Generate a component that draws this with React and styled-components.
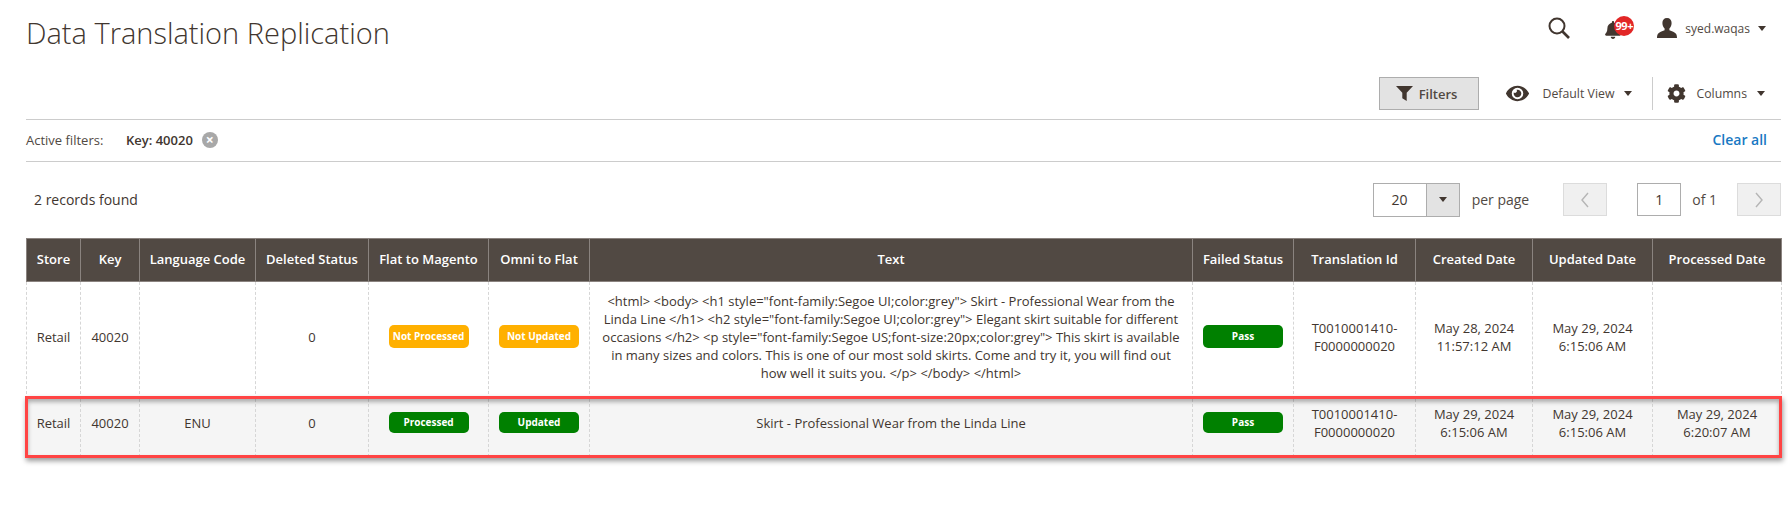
import React from 'react';
import styled, { createGlobalStyle } from 'styled-components';
import { FaBell, FaCog, FaEye } from 'react-icons/fa';

const GlobalStyle = createGlobalStyle`
  html, body {
    margin: 0;
    background: #fff;
  }
  body {
    font-family: "Open Sans", "Liberation Sans", sans-serif;
    color: #41362f;
    overflow: hidden;
  }
`;

const columns = [
  { label: 'Store', width: 54 },
  { label: 'Key', width: 59 },
  { label: 'Language Code', width: 116 },
  { label: 'Deleted Status', width: 113 },
  { label: 'Flat to Magento', width: 120 },
  { label: 'Omni to Flat', width: 101 },
  { label: 'Text', width: 603 },
  { label: 'Failed Status', width: 101 },
  { label: 'Translation Id', width: 122 },
  { label: 'Created Date', width: 117 },
  { label: 'Updated Date', width: 120 },
  { label: 'Processed Date', width: 129 },
];

const longText =
  '<html> <body> <h1 style="font-family:Segoe UI;color:grey"> Skirt - Professional Wear from the Linda Line </h1> <h2 style="font-family:Segoe UI;color:grey"> Elegant skirt suitable for different occasions </h2> <p style="font-family:Segoe US;font-size:20px;color:grey"> This skirt is available in many sizes and colors. This is one of our most sold skirts. Come and try it, you will find out how well it suits you. </p> </body> </html>';

const Page = styled.div`
  width: 1788px;
  height: 509px;
  box-sizing: border-box;
  padding: 0 7px 0 26px;
`;

const Header = styled.header`
  height: 77px;
  display: flex;
  justify-content: space-between;
  align-items: flex-start;
`;

const Title = styled.h1`
  margin: 14px 0 0;
  font-size: 29px;
  line-height: 38px;
  font-weight: 300;
  color: #41362f;
`;

const Actions = styled.div`
  display: flex;
  align-items: center;
  height: 24px;
  margin-top: 16px;
  padding-right: 15px;
`;

const SearchIcon = styled.svg`
  width: 22px;
  height: 22px;
  margin-right: 34px;
`;

const Bell = styled.div`
  position: relative;
  width: 18px;
  height: 20px;
  margin-right: 35px;
  display: flex;
  align-items: center;
  color: #41362f;
  font-size: 18px;
  padding-top: 4px;
`;

const Badge = styled.span`
  position: absolute;
  left: 10px;
  top: 0;
  width: 20px;
  height: 20px;
  border-radius: 50%;
  background: #e22626;
  color: #fff;
  font-size: 11px;
  font-weight: 700;
  letter-spacing: -0.4px;
  line-height: 20px;
  text-align: center;
`;

const UserIcon = styled.svg`
  width: 20px;
  height: 20px;
  margin-right: 8px;
`;

const UserName = styled.span`
  font-size: 12px;
  color: #514943;
`;

const Caret = styled.span`
  width: 0;
  height: 0;
  margin-left: ${(p) => p.$gap || 10}px;
  border-left: 4px solid transparent;
  border-right: 4px solid transparent;
  border-top: 5px solid #41362f;
`;

const Toolbar = styled.div`
  height: 42px;
  display: flex;
  justify-content: flex-end;
  align-items: flex-start;
  border-bottom: 1px solid #cccccc;
  padding-right: 16px;
`;

const FilterButton = styled.button`
  width: 100px;
  height: 33px;
  box-sizing: border-box;
  padding: 0 4px 0 0;
  margin-right: 27px;
  display: flex;
  align-items: center;
  justify-content: center;
  gap: 6px;
  background: #e3e3e3;
  border: 1px solid #adadad;
  color: #514943;
  font-family: inherit;
  font-size: 13px;
  font-weight: 600;
`;

const FunnelIcon = styled.svg`
  width: 17px;
  height: 15px;
`;

const ToolbarItem = styled.div`
  height: 33px;
  display: flex;
  align-items: center;
  font-size: 12.3px;
  color: #514943;
  svg {
    color: #41362f;
  }
`;

const ViewItem = styled(ToolbarItem)`
  padding-right: 20px;
  border-right: 1px solid #cccccc;
  svg {
    font-size: 23px;
    margin-right: 14px;
  }
`;

const ColumnsItem = styled(ToolbarItem)`
  padding-left: 14px;
  svg {
    font-size: 19px;
    margin-right: 10px;
  }
`;

const ActiveFilters = styled.div`
  height: 42px;
  display: flex;
  align-items: center;
  border-bottom: 1px solid #cccccc;
  font-size: 13px;
  padding: 0 14px 2px 0;
  box-sizing: border-box;
`;

const FilterLabel = styled.span`
  width: 100px;
  color: #514943;
`;

const FilterValue = styled.span`
  font-weight: 600;
  color: #41362f;
`;

const RemoveFilter = styled.span`
  width: 16px;
  height: 16px;
  margin-left: 9px;
  border-radius: 50%;
  background: #a8a8a8;
  color: #fff;
  font-size: 14px;
  font-weight: 700;
  line-height: 15px;
  text-align: center;
`;

const ClearAll = styled.a`
  margin-left: auto;
  color: #1979c3;
  font-size: 14px;
  font-weight: 600;
`;

const Pager = styled.div`
  height: 76px;
  display: flex;
  align-items: center;
  padding-bottom: 1px;
  box-sizing: border-box;
`;

const Records = styled.span`
  margin-left: 8px;
  margin-right: auto;
  font-size: 14px;
  color: #41362f;
`;

const PerPage = styled.div`
  width: 87px;
  height: 34px;
  box-sizing: border-box;
  display: flex;
  border: 1px solid #adadad;
`;

const PerPageValue = styled.span`
  flex: 1;
  font-size: 14px;
  line-height: 32px;
  text-align: center;
`;

const PerPageToggle = styled.span`
  width: 32px;
  display: flex;
  align-items: center;
  justify-content: center;
  background: #e3e3e3;
  border-left: 1px solid #adadad;
  ${Caret} {
    margin: 0;
  }
`;

const PagerText = styled.span`
  margin: ${(p) => p.$margin};
  font-size: 14px;
  color: #514943;
`;

const PageButton = styled.button`
  width: 44px;
  height: 33px;
  box-sizing: border-box;
  padding: 0;
  display: flex;
  align-items: center;
  justify-content: center;
  background: #f0f0f0;
  border: 1px solid #dcdcdc;
  svg {
    width: 10px;
    height: 16px;
  }
`;

const PageInput = styled.span`
  width: 44px;
  height: 33px;
  box-sizing: border-box;
  margin-left: 30px;
  border: 1px solid #adadad;
  font-size: 14px;
  line-height: 31px;
  text-align: center;
`;

const TableWrap = styled.div`
  position: relative;
  width: 1755px;
`;

const Table = styled.table`
  width: 1755px;
  table-layout: fixed;
  border-collapse: collapse;
`;

const HeadCell = styled.th`
  width: ${(p) => p.$width}px;
  height: 43px;
  box-sizing: border-box;
  padding: 0 0 3px;
  background: #514943;
  border: 1px solid #8a837f;
  color: #fff;
  font-size: 13px;
  font-weight: 600;
  text-align: center;
`;

const Row = styled.tr`
  background: ${(p) => (p.$shaded ? '#f5f5f5' : '#fff')};
`;

const Cell = styled.td`
  height: ${(p) => (p.$shaded ? 58 : 117)}px;
  box-sizing: border-box;
  padding: ${(p) => (p.$shaded ? '0 8px 10px' : '0 8px 7px')};
  border-left: 1px dashed #d6d6d6;
  border-right: 1px dashed #d6d6d6;
  font-size: 13px;
  line-height: 18px;
  color: #41362f;
  text-align: center;
`;

const StatusBadge = styled.span`
  display: block;
  width: 80px;
  height: ${(p) => (p.$shaded ? 21 : 23)}px;
  margin: 0 auto;
  border-radius: 5px;
  background: ${(p) => (p.$warn ? '#ffb000' : '#008000')};
  color: #fff;
  font-size: 10px;
  font-weight: 700;
  line-height: ${(p) => (p.$shaded ? 21 : 23)}px;
`;

// red annotation drawn over the second row
const Highlight = styled.div`
  position: absolute;
  left: -1px;
  right: -1px;
  top: 158px;
  height: 62px;
  box-sizing: border-box;
  border: 3px solid #ff4444;
  box-shadow: 1px 3px 5px rgba(0, 0, 0, 0.4), inset 0 3px 4px rgba(0, 0, 0, 0.3);
  pointer-events: none;
`;

const rows = [
  {
    store: 'Retail',
    key: '40020',
    lang: '',
    deleted: '0',
    flat: ['Not Processed', true],
    omni: ['Not Updated', true],
    text: longText,
    created: ['May 28, 2024', '11:57:12 AM'],
    updated: ['May 29, 2024', '6:15:06 AM'],
    processed: null,
  },
  {
    store: 'Retail',
    key: '40020',
    lang: 'ENU',
    deleted: '0',
    flat: ['Processed', false],
    omni: ['Updated', false],
    text: 'Skirt - Professional Wear from the Linda Line',
    created: ['May 29, 2024', '6:15:06 AM'],
    updated: ['May 29, 2024', '6:15:06 AM'],
    processed: ['May 29, 2024', '6:20:07 AM'],
    shaded: true,
  },
];

const DateLines = ({ value }) =>
  value ? (
    <>
      {value[0]}
      <br />
      {value[1]}
    </>
  ) : null;

const App = () => {
  return (
    <Page>
      <GlobalStyle />
      <Header>
        <Title>Data Translation Replication</Title>
        <Actions>
          <SearchIcon viewBox="0 0 22 22" fill="none" stroke="#41362f" strokeWidth="2">
            <circle cx="9" cy="9" r="7.5" />
            <path d="M14.5 14.5L21 21" strokeWidth="2.6" />
          </SearchIcon>
          <Bell>
            <FaBell />
            <Badge>99+</Badge>
          </Bell>
          <UserIcon viewBox="0 0 20 20" fill="#41362f">
            <path d="M10 0c3 0 4.600 2 4.600 5 0 2.400-1 4.400-2.200 5.600v1.600c2.600 1 5.400 2 6.600 3.600.6.9 1 2.600 1 4.200H0c0-1.600.4-3.300 1-4.200 1.200-1.600 4-2.600 6.600-3.600v-1.600C6.400 9.400 5.400 7.400 5.400 5c0-3 1.600-5 4.600-5z" />
          </UserIcon>
          <UserName>syed.waqas</UserName>
          <Caret $gap={8} />
        </Actions>
      </Header>

      <Toolbar>
        <FilterButton>
          <FunnelIcon viewBox="0 0 17 15" fill="#41362f">
            <path d="M0 0h17l-6.300 6.800V15L6.300 12.200V6.800z" />
          </FunnelIcon>
          Filters
        </FilterButton>
        <ViewItem>
          <FaEye />
          Default View
          <Caret />
        </ViewItem>
        <ColumnsItem>
          <FaCog />
          Columns
          <Caret />
        </ColumnsItem>
      </Toolbar>

      <ActiveFilters>
        <FilterLabel>Active filters:</FilterLabel>
        <FilterValue>Key: 40020</FilterValue>
        <RemoveFilter>×</RemoveFilter>
        <ClearAll>Clear all</ClearAll>
      </ActiveFilters>

      <Pager>
        <Records>2 records found</Records>
        <PerPage>
          <PerPageValue>20</PerPageValue>
          <PerPageToggle>
            <Caret />
          </PerPageToggle>
        </PerPage>
        <PagerText $margin="0 34px 0 12px">per page</PagerText>
        <PageButton>
          <svg viewBox="0 0 10 16" fill="none" stroke="#b5b5b5" strokeWidth="1.4">
            <path d="M8 1L2 8l6 7" />
          </svg>
        </PageButton>
        <PageInput>1</PageInput>
        <PagerText $margin="0 20px 0 11px">of 1</PagerText>
        <PageButton>
          <svg viewBox="0 0 10 16" fill="none" stroke="#b5b5b5" strokeWidth="1.4">
            <path d="M2 1l6 7-6 7" />
          </svg>
        </PageButton>
      </Pager>

      <TableWrap>
        <Table>
          <thead>
            <tr>
              {columns.map((col) => (
                <HeadCell key={col.label} $width={col.width}>
                  {col.label}
                </HeadCell>
              ))}
            </tr>
          </thead>
          <tbody>
            {rows.map((row, i) => (
              <Row key={i} $shaded={row.shaded}>
                <Cell $shaded={row.shaded}>{row.store}</Cell>
                <Cell $shaded={row.shaded}>{row.key}</Cell>
                <Cell $shaded={row.shaded}>{row.lang}</Cell>
                <Cell $shaded={row.shaded}>{row.deleted}</Cell>
                <Cell $shaded={row.shaded}>
                  <StatusBadge $warn={row.flat[1]} $shaded={row.shaded}>
                    {row.flat[0]}
                  </StatusBadge>
                </Cell>
                <Cell $shaded={row.shaded}>
                  <StatusBadge $warn={row.omni[1]} $shaded={row.shaded}>
                    {row.omni[0]}
                  </StatusBadge>
                </Cell>
                <Cell $shaded={row.shaded}>{row.text}</Cell>
                <Cell $shaded={row.shaded}>
                  <StatusBadge $shaded={row.shaded}>Pass</StatusBadge>
                </Cell>
                <Cell $shaded={row.shaded}>T0010001410-F0000000020</Cell>
                <Cell $shaded={row.shaded}>
                  <DateLines value={row.created} />
                </Cell>
                <Cell $shaded={row.shaded}>
                  <DateLines value={row.updated} />
                </Cell>
                <Cell $shaded={row.shaded}>
                  <DateLines value={row.processed} />
                </Cell>
              </Row>
            ))}
          </tbody>
        </Table>
        <Highlight />
      </TableWrap>
    </Page>
  );
};

export default App;
